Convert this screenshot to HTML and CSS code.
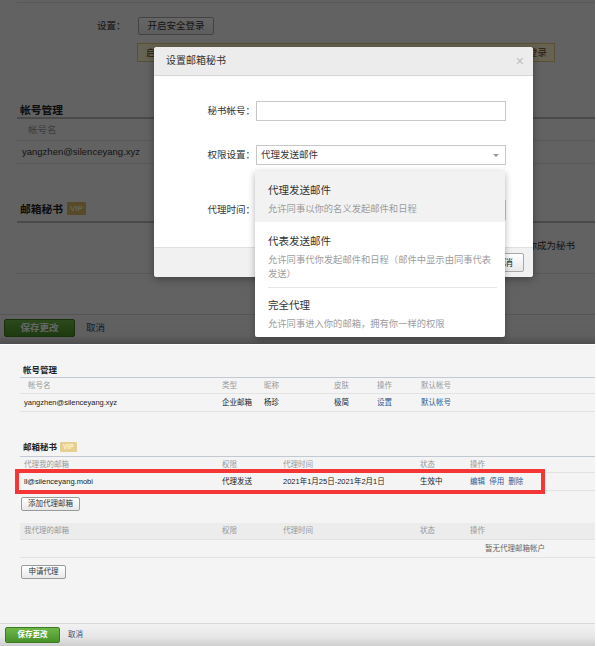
FILE: index.html
```html
<!DOCTYPE html>
<html lang="zh-CN">
<head>
<meta charset="utf-8">
<title>邮箱秘书</title>
<link rel="stylesheet" href="styles.css">
</head>
<body>
<div class="shot shot-top">
  <div class="page">
    <div class="topline"></div>
    <div class="sec-row"><span class="sec-label">设置：</span><span class="btn sec-btn">开启安全登录</span></div>
    <div class="notice"><span>启用</span><span>登录</span></div>
    <div class="t-head t-head1">帐号管理</div>
    <div class="t-row t-th"><span>帐号名</span></div>
    <div class="t-row t-td"><span>yangzhen@silenceyang.xyz</span></div>
    <div class="t-head t-head2">邮箱秘书<span class="vip">VIP</span></div>
    <div class="t-empty">暂无同事设置你成为秘书</div>
    <div class="t-foot"><span class="btn-green t-green">保存更改</span><span class="cancel">取消</span></div>
  </div>
  <div class="mask"></div>
  <div class="modal">
    <div class="modal-head"><span>设置邮箱秘书</span><span class="close">×</span></div>
    <div class="modal-body">
      <div class="form-row"><span class="form-label">秘书帐号：</span><div class="field"></div></div>
      <div class="form-row row2"><span class="form-label">权限设置：</span><div class="field select"><span>代理发送邮件</span><span class="caret"></span></div></div>
      <div class="form-row row3"><span class="form-label">代理时间：</span><div class="field"></div></div>
    </div>
    <div class="modal-foot"><span class="btn mbtn">取消</span></div>
    <div class="dropdown">
      <div class="dd-item active">
        <div class="dd-title">代理发送邮件</div>
        <div class="dd-desc">允许同事以你的名义发起邮件和日程</div>
      </div>
      <div class="dd-item">
        <div class="dd-title">代表发送邮件</div>
        <div class="dd-desc">允许同事代你发起邮件和日程（邮件中显示由同事代表发送）</div>
      </div>
      <div class="dd-sep"></div>
      <div class="dd-item last">
        <div class="dd-title">完全代理</div>
        <div class="dd-desc">允许同事进入你的邮箱，拥有你一样的权限</div>
      </div>
    </div>
  </div>
</div>

<div class="shot shot-bottom">
  <div class="b-head b-head1">帐号管理</div>
  <div class="b-row cols1 b-th"><span>帐号名</span><span>类型</span><span>昵称</span><span>皮肤</span><span>操作</span><span>默认帐号</span></div>
  <div class="b-row cols1 b-td"><span>yangzhen@silenceyang.xyz</span><span>企业邮箱</span><span>杨珍</span><span>极简</span><span class="link">设置</span><span class="link">默认帐号</span></div>
  <div class="b-head b-head2">邮箱秘书<span class="vip b-vip">VIP</span></div>
  <div class="b-row cols2 b-th"><span>代理我的邮箱</span><span>权限</span><span>代理时间</span><span>状态</span><span>操作</span></div>
  <div class="b-row cols2 b-td"><span>ll@silenceyang.mobi</span><span>代理发送</span><span>2021年1月25日-2021年2月1日</span><span>生效中</span><span class="link">编辑&nbsp;&nbsp;停用&nbsp;&nbsp;删除</span></div>
  <span class="btn b-btn b-add">添加代理邮箱</span>
  <div class="b-row cols2 b-th b-th2"><span>我代理的邮箱</span><span>权限</span><span>代理时间</span><span>状态</span><span>操作</span></div>
  <div class="b-row b-none"><span>暂无代理邮箱帐户</span></div>
  <span class="btn b-btn b-apply">申请代理</span>
  <div class="b-foot"><span class="btn-green b-green">保存更改</span><span class="cancel">取消</span></div>
  <div class="highlight"></div>
</div>
</body>
</html>
```

FILE: styles.css
```css
* { box-sizing: border-box; margin: 0; padding: 0; }
html, body { width: 597px; height: 646px; overflow: hidden; background: #fff; }
body { font-family: "Liberation Sans", "Noto Sans CJK SC", sans-serif; color: #333; }

.shot { position: relative; width: 595px; overflow: hidden; background: #f4f4f4; }

/* ---------- top screenshot ---------- */
.shot-top { height: 344px; font-size: 9.5px; line-height: 14px; }
.page { display: flex; flex-direction: column; height: 100%; }
.topline { height: 3px; margin-left: 17px; border-bottom: 1px solid #dcdcdc; }
.sec-row { display: flex; align-items: center; height: 18px; margin-top: 14px; padding-left: 97px; }
.sec-label { width: 41px; }
.btn { display: flex; align-items: center; justify-content: center; border: 1px solid #a8a8a8; border-radius: 2px; background: linear-gradient(#ffffff, #e8e8e8); color: #333; white-space: nowrap; }
.sec-btn { width: 76px; height: 18px; }
.notice { display: flex; justify-content: space-between; align-items: center; width: 418px; height: 19px; margin: 8px 0 0 137px; padding: 0 7px 0 8px; border: 1px solid #e0c97a; background: #fff7d2; color: #5c4a1c; }
.t-head { margin-left: 17px; padding-left: 3px; font-weight: bold; font-size: 10.75px; color: #222; border-bottom: 2px solid #b8b8b8; display: flex; align-items: flex-start; }
.t-head1 { margin-top: 41px; height: 16px; }
.t-head2 { margin-top: 38px; height: 21px; }
.vip { margin-left: 4px; padding: 0 3px; height: 13px; line-height: 13px; font-size: 8px; font-weight: bold; background: #d8b866; color: #fff4d8; border-radius: 1px; }
.t-row { display: flex; align-items: center; margin-left: 17px; border-bottom: 1px solid #dcdcdc; }
.t-th { height: 22px; padding-left: 11px; color: #999; }
.t-td { height: 23px; padding-left: 5px; }
.t-empty { margin-left: 17px; height: 51px; padding: 16px 20px 0 0; text-align: right; border-bottom: 1px solid #dcdcdc; }
.t-foot { margin-top: auto; height: 30px; padding: 4px 0 0 4px; display: flex; align-items: flex-start; border-top: 1px solid #d4d4d4; background: linear-gradient(#f4f4f4 0%, #eeeeee 70%, #c4c4c4 100%); }
.btn-green { display: flex; align-items: center; justify-content: center; border: 1px solid #3b7a1f; border-radius: 2px; background: linear-gradient(#6fb748, #48922a); color: #fff; font-weight: bold; }
.t-green { width: 71px; height: 18px; }
.cancel { color: #2d4f7c; }
.t-foot .cancel { margin-left: 11px; line-height: 18px; }

.mask { position: absolute; inset: 0; background: rgba(0, 0, 0, 0.6); }

.modal { position: absolute; left: 154px; top: 47px; width: 379px; height: 230px; display: flex; flex-direction: column; background: #fff; border-radius: 3px; box-shadow: 0 2px 8px rgba(0, 0, 0, 0.35); }
.modal-head { height: 29px; padding: 0 9px 0 12px; display: flex; justify-content: space-between; align-items: center; background: #ececec; border-bottom: 1px solid #d6d6d6; border-radius: 3px 3px 0 0; font-size: 10px; color: #333; }
.close { font-size: 14px; color: #bdbdbd; }
.modal-body { flex: 1; padding-top: 25px; }
.form-row { display: flex; align-items: center; height: 20px; }
.row2 { margin-top: 24px; }
.row3 { margin-top: 35px; }
.form-label { width: 101px; text-align: right; }
.field { width: 250px; height: 20px; border: 1px solid #c8c8c8; background: #fff; margin-left: 1px; }
.select { display: flex; align-items: center; justify-content: space-between; padding: 0 6px 0 4px; }
.caret { width: 0; height: 0; border-left: 3px solid transparent; border-right: 3px solid transparent; border-top: 3px solid #999; }
.modal-foot { height: 30px; display: flex; justify-content: flex-end; align-items: center; gap: 6px; padding-right: 9px; background: #f1f1f1; border-top: 1px solid #e0e0e0; border-radius: 0 0 3px 3px; }
.mbtn { width: 41px; height: 19px; }

.dropdown { position: absolute; left: 101px; top: 124px; width: 250px; background: #fff; border-radius: 2px; box-shadow: 0 2px 7px rgba(0, 0, 0, 0.3); }
.dd-item { padding: 10px 8px 6px 13px; }
.dd-item.active { background: #f2f2f2; }
.dd-item.last { padding-top: 8px; }
.dd-title { font-size: 10.5px; line-height: 18px; color: #333; }
.dd-desc { margin-top: 3px; font-size: 9.3px; line-height: 14px; color: #9c9c9c; }
.dd-sep { height: 1px; margin: 0 8px 0 13px; background: #e6e6e6; }

/* ---------- bottom screenshot ---------- */
.shot-bottom { height: 302px; font-size: 7.5px; line-height: 12px; border-top: 1px solid #fff; display: flex; flex-direction: column; }
.b-head { margin-left: 20px; padding-left: 3px; font-weight: bold; font-size: 8.5px; line-height: 14px; color: #222; border-bottom: 1px solid #c3c9d2; display: flex; align-items: flex-start; }
.b-head1 { margin-top: 18px; height: 15px; }
.b-head2 { margin-top: 28px; height: 17px; }
.b-vip { margin-left: 3px; margin-top: 2px; height: 10px; line-height: 10px; font-size: 6.5px; background: #e6cf92; }
.b-row { display: grid; align-items: center; margin-left: 20px; border-bottom: 1px solid #e2e2e2; }
.b-row > span:first-child { padding-left: 4px; }
.cols1 { grid-template-columns: 202px 42px 70px 43px 44px 1fr; }
.cols2 { grid-template-columns: 202px 61px 137px 50px 1fr; }
.b-th { height: 16px; color: #999; }
.b-head1 + .b-th > span:first-child { padding-left: 8px; }
.b-td { height: 18px; color: #222; }
.link { color: #2d5a94; }
.b-btn { align-self: flex-start; height: 14px; margin-left: 21px; border-color: #9a9a9a; }
.b-add { width: 59px; margin-top: 6px; }
.b-th2 { margin-top: 12px; height: 17px; background: #ececec; }
.b-none { display: flex; justify-content: flex-end; height: 18px; padding-right: 50px; color: #666; }
.b-none > span:first-child { padding-left: 0; }
.b-apply { width: 45px; margin-top: 7px; }
.b-foot { margin-top: auto; height: 23px; padding: 3px 0 0 5px; display: flex; align-items: flex-start; border-top: 1px solid #d8d8d8; background: linear-gradient(#f2f2f2 0%, #e6e6e6 60%, #cdcdcd 100%); }
.b-green { width: 55px; height: 16px; font-size: 7.5px; }
.b-foot .cancel { margin-left: 8px; line-height: 16px; }
.highlight { position: absolute; left: 15px; top: 124px; width: 530px; height: 25px; border: 4px solid #f43636; }
```
